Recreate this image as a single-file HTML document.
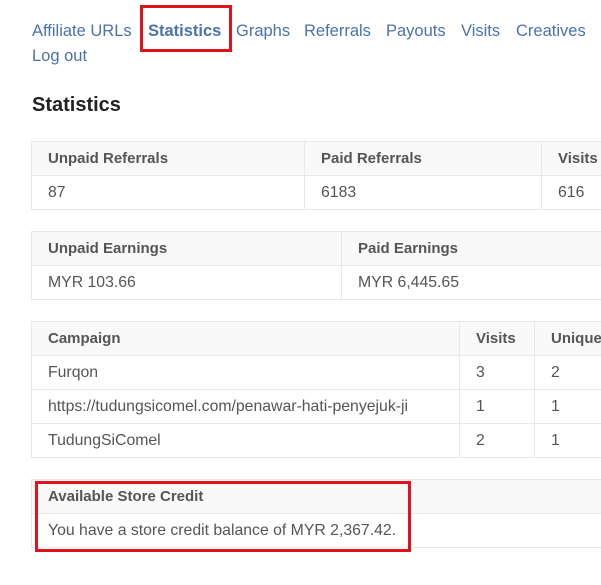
<!DOCTYPE html>
<html><head><meta charset="utf-8"><style>
body{margin:0;width:601px;height:585px;overflow:hidden;background:#fff;font-family:"Liberation Sans",sans-serif;position:relative}
.nav{position:absolute;left:32px;top:18px;width:570px;font-size:16.5px;line-height:26px;color:#4a72b0;white-space:nowrap}
.nav span{position:absolute}
.red{position:absolute;border:3px solid #e0121a;box-sizing:border-box}
h2{position:absolute;left:32px;top:94px;margin:0;font-size:20px;font-weight:bold;color:#222}
table{position:absolute;left:31px;border-collapse:collapse;font-size:15.8px;color:#555}
td,th{border:1px solid #e8e8e8;height:34px;padding:0 0 0 16px;text-align:left;box-sizing:border-box;white-space:nowrap;overflow:hidden}
td{padding-top:1px}
th{background:#f9f9f9;font-weight:bold;color:#555;font-size:15px}
</style></head><body>
<div class="nav">
<span style="left:0;top:0">Affiliate URLs</span>
<span style="left:116px;top:0;font-weight:bold">Statistics</span>
<span style="left:204px;top:0">Graphs</span>
<span style="left:272px;top:0">Referrals</span>
<span style="left:354px;top:0">Payouts</span>
<span style="left:429px;top:0">Visits</span>
<span style="left:484px;top:0">Creatives</span>
<span style="left:0;top:25px">Log out</span>
</div>
<div class="red" style="left:140px;top:5px;width:92px;height:47px"></div>
<h2>Statistics</h2>
<table style="top:141px;width:620px"><tr><th style="width:273px">Unpaid Referrals</th><th style="width:237px">Paid Referrals</th><th>Visits</th></tr>
<tr><td>87</td><td>6183</td><td>616</td></tr></table>
<table style="top:231px;width:620px"><tr><th style="width:310px">Unpaid Earnings</th><th>Paid Earnings</th></tr>
<tr><td>MYR 103.66</td><td>MYR 6,445.65</td></tr></table>
<table style="top:321px;width:620px"><tr><th style="width:428px">Campaign</th><th style="width:75px">Visits</th><th>Unique</th></tr>
<tr><td>Furqon</td><td>3</td><td>2</td></tr>
<tr><td>https://tudungsicomel.com/penawar-hati-penyejuk-ji</td><td>1</td><td>1</td></tr>
<tr><td>TudungSiComel</td><td>2</td><td>1</td></tr></table>
<table style="top:479px;width:620px"><tr><th>Available Store Credit</th></tr>
<tr><td>You have a store credit balance of MYR 2,367.42.</td></tr></table>
<div class="red" style="left:35px;top:481px;width:376px;height:71px"></div>
</body></html>
